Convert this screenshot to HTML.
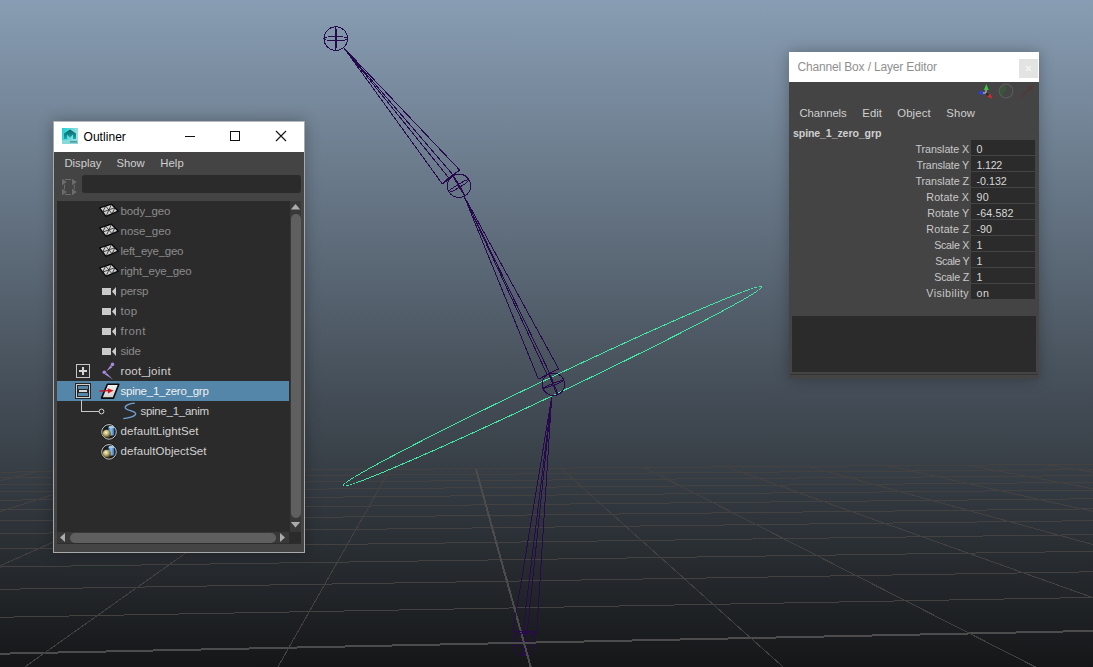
<!DOCTYPE html>
<html><head><meta charset="utf-8">
<style>
*{box-sizing:border-box;margin:0;padding:0}
html,body{width:1093px;height:667px;overflow:hidden}
body{position:relative;font-family:"Liberation Sans",sans-serif;
 background:linear-gradient(to bottom,rgb(136,157,179) 0px,rgb(13,13,13) 713px) 0 0/1093px 713px no-repeat;}
svg.vp{position:absolute;left:0;top:0}
.win{position:absolute;background:#444;}
.abs{position:absolute}
.title{position:absolute;left:0;top:0;right:0;background:#fff;}
.t{position:absolute;white-space:nowrap;line-height:1}
</style></head><body>
<svg class="vp" width="1093" height="667" viewBox="0 0 1093 667">
<g shape-rendering="crispEdges">
<circle cx="524" cy="643.9" r="11.65" fill="none" stroke="#28094e" stroke-width="1"/><ellipse cx="524" cy="643.9" rx="11.65" ry="2.21" transform="rotate(0 524 643.9)" fill="none" stroke="#28094e" stroke-width="1"/><ellipse cx="524" cy="643.9" rx="11.65" ry="0.58" transform="rotate(90 524 643.9)" fill="none" stroke="#28094e" stroke-width="1"/>
<line x1="-635.99" y1="476.71" x2="1422.83" y2="461.87" stroke="#444240" stroke-width="1"/>
<line x1="-701.77" y1="483.35" x2="1472.77" y2="466.71" stroke="#444240" stroke-width="1"/>
<line x1="-776.04" y1="490.83" x2="1528.11" y2="472.06" stroke="#444240" stroke-width="1"/>
<line x1="-860.57" y1="499.35" x2="1589.76" y2="478.04" stroke="#444240" stroke-width="1"/>
<line x1="-957.65" y1="509.14" x2="1658.88" y2="484.73" stroke="#444240" stroke-width="1"/>
<line x1="-1070.28" y1="520.50" x2="1736.90" y2="492.29" stroke="#444240" stroke-width="1"/>
<line x1="-1202.54" y1="533.83" x2="1825.66" y2="500.88" stroke="#444240" stroke-width="1"/>
<line x1="-1360.04" y1="549.71" x2="1927.56" y2="510.75" stroke="#444240" stroke-width="1"/>
<line x1="-1550.78" y1="568.94" x2="2045.73" y2="522.20" stroke="#444240" stroke-width="1"/>
<line x1="-1786.51" y1="592.70" x2="2184.42" y2="535.63" stroke="#444240" stroke-width="1"/>
<line x1="-2085.28" y1="622.82" x2="2349.47" y2="551.61" stroke="#444240" stroke-width="1"/>
<line x1="-2476.28" y1="662.24" x2="2549.19" y2="570.95" stroke="#444240" stroke-width="1"/>
<line x1="-3010.02" y1="716.55" x2="2795.78" y2="595.34" stroke="#4c4c4c" stroke-width="2"/>
<line x1="-3782.12" y1="793.89" x2="3107.94" y2="625.07" stroke="#444240" stroke-width="1"/>
<line x1="-635.99" y1="476.71" x2="-2573.06" y2="672.00" stroke="#444240" stroke-width="1"/>
<line x1="-536.00" y1="475.99" x2="-2312.58" y2="672.00" stroke="#444240" stroke-width="1"/>
<line x1="-437.44" y1="475.28" x2="-2052.40" y2="672.00" stroke="#444240" stroke-width="1"/>
<line x1="-340.27" y1="474.58" x2="-1792.55" y2="672.00" stroke="#444240" stroke-width="1"/>
<line x1="-244.48" y1="473.89" x2="-1533.01" y2="672.00" stroke="#444240" stroke-width="1"/>
<line x1="-150.02" y1="473.21" x2="-1273.78" y2="672.00" stroke="#444240" stroke-width="1"/>
<line x1="-56.88" y1="472.54" x2="-1014.87" y2="672.00" stroke="#444240" stroke-width="1"/>
<line x1="34.97" y1="471.88" x2="-756.27" y2="672.00" stroke="#444240" stroke-width="1"/>
<line x1="125.56" y1="471.22" x2="-497.98" y2="672.00" stroke="#444240" stroke-width="1"/>
<line x1="214.92" y1="470.58" x2="-240.00" y2="672.00" stroke="#444240" stroke-width="1"/>
<line x1="303.08" y1="469.94" x2="17.66" y2="672.00" stroke="#444240" stroke-width="1"/>
<line x1="390.04" y1="469.32" x2="275.01" y2="672.00" stroke="#444240" stroke-width="1"/>
<line x1="475.85" y1="468.70" x2="532.05" y2="672.00" stroke="#4c4c4c" stroke-width="2"/>
<line x1="560.52" y1="468.09" x2="788.79" y2="672.00" stroke="#444240" stroke-width="1"/>
<line x1="644.07" y1="467.48" x2="1045.21" y2="672.00" stroke="#444240" stroke-width="1"/>
<line x1="726.53" y1="466.89" x2="1301.32" y2="672.00" stroke="#444240" stroke-width="1"/>
<line x1="807.92" y1="466.30" x2="1557.13" y2="672.00" stroke="#444240" stroke-width="1"/>
<line x1="888.26" y1="465.72" x2="1812.63" y2="672.00" stroke="#444240" stroke-width="1"/>
<line x1="967.57" y1="465.15" x2="2067.82" y2="672.00" stroke="#444240" stroke-width="1"/>
<line x1="1045.86" y1="464.59" x2="2322.70" y2="672.00" stroke="#444240" stroke-width="1"/>
<line x1="1123.17" y1="464.03" x2="2577.28" y2="672.00" stroke="#444240" stroke-width="1"/>
<line x1="1199.50" y1="463.48" x2="2831.55" y2="672.00" stroke="#444240" stroke-width="1"/>
<line x1="1274.87" y1="462.94" x2="3085.52" y2="672.00" stroke="#444240" stroke-width="1"/>
<line x1="1349.31" y1="462.40" x2="3339.18" y2="672.00" stroke="#444240" stroke-width="1"/>
<line x1="1422.83" y1="461.87" x2="3592.54" y2="672.00" stroke="#444240" stroke-width="1"/>
</g>
<g shape-rendering="crispEdges">
<ellipse cx="552.3" cy="386.3" rx="231.48" ry="8.6" transform="rotate(-25.430 552.3 386.3)" fill="none" stroke="#44e6a4" stroke-width="1"/>
<circle cx="335.8" cy="38.6" r="11.8" fill="none" stroke="#28094e" stroke-width="1"/><ellipse cx="335.8" cy="38.6" rx="11.8" ry="0.47" transform="rotate(90 335.8 38.6)" fill="none" stroke="#28094e" stroke-width="1"/><ellipse cx="335.8" cy="38.6" rx="11.8" ry="2.01" transform="rotate(0 335.8 38.6)" fill="none" stroke="#28094e" stroke-width="1"/><line x1="344" y1="48" x2="442.5" y2="184.2" stroke="#28094e" stroke-width="1"/><line x1="344" y1="48" x2="448.8" y2="177.9" stroke="#28094e" stroke-width="1"/><line x1="344" y1="48" x2="453.3" y2="175.2" stroke="#28094e" stroke-width="1"/><line x1="344" y1="48" x2="459.6" y2="170" stroke="#28094e" stroke-width="1"/><polygon points="442.5,184.2 448.8,177.9 459.6,170 453.3,175.2" fill="none" stroke="#28094e" stroke-width="1"/><circle cx="459" cy="185.8" r="11.7" fill="none" stroke="#28094e" stroke-width="1"/><ellipse cx="459" cy="185.8" rx="11.7" ry="0.47" transform="rotate(60 459 185.8)" fill="none" stroke="#28094e" stroke-width="1"/><ellipse cx="459" cy="185.8" rx="11.7" ry="1.52" transform="rotate(-31 459 185.8)" fill="none" stroke="#28094e" stroke-width="1"/><line x1="464" y1="196" x2="538.5" y2="379.3" stroke="#28094e" stroke-width="1"/><line x1="464" y1="196" x2="547" y2="374.3" stroke="#28094e" stroke-width="1"/><line x1="464" y1="196" x2="549.7" y2="373.2" stroke="#28094e" stroke-width="1"/><line x1="464" y1="196" x2="558.7" y2="368.9" stroke="#28094e" stroke-width="1"/><polygon points="538.5,379.3 547,374.3 558.7,368.9 549.7,373.2" fill="none" stroke="#28094e" stroke-width="1"/><circle cx="553.4" cy="384.3" r="11.2" fill="none" stroke="#28094e" stroke-width="1"/><ellipse cx="553.4" cy="384.3" rx="11.2" ry="0.90" transform="rotate(-21 553.4 384.3)" fill="none" stroke="#28094e" stroke-width="1"/><ellipse cx="553.4" cy="384.3" rx="11.2" ry="0.56" transform="rotate(68 553.4 384.3)" fill="none" stroke="#28094e" stroke-width="1"/><line x1="551.7" y1="396.8" x2="513.1" y2="631" stroke="#28094e" stroke-width="1"/><line x1="551.7" y1="396.8" x2="523" y2="631" stroke="#28094e" stroke-width="1"/><line x1="551.7" y1="396.8" x2="527.3" y2="631.2" stroke="#28094e" stroke-width="1"/><line x1="551.7" y1="396.8" x2="536.7" y2="633.2" stroke="#28094e" stroke-width="1"/><polygon points="513.1,631 532,631 536.7,633.2 517.1,633.2" fill="none" stroke="#28094e" stroke-width="1"/>
</g>
</svg>

<!-- Outliner -->
<div class="win" style="left:53px;top:121px;width:252px;height:432px;border:1px solid #a9a9a9;border-top:none;box-shadow:0 0 14px rgba(0,0,0,0.28)">
  <div class="title" style="height:31px;border-top:1px solid #b9b9b9">
  </div>
</div>
<svg class="abs" style="left:62px;top:128px;" width="16" height="16" viewBox="0 0 16 16"><defs><linearGradient id="mg" x1="0" y1="0" x2="1" y2="0.3"><stop offset="0" stop-color="#18d0d4"/><stop offset="1" stop-color="#9fe0e2"/></linearGradient><linearGradient id="mg2" x1="0" y1="0" x2="0" y2="1"><stop offset="0" stop-color="#0a5f66"/><stop offset="1" stop-color="#1aa8ae"/></linearGradient></defs><rect x="0" y="0" width="16" height="16" fill="url(#mg)"/><polygon points="2,11 2,5.5 8,1.5 14,5.5 14,11 11,11 11,6.5 8,9.5 5,6.5 5,11" fill="url(#mg2)"/><rect x="0" y="12" width="16" height="4" fill="#86dada"/><rect x="8" y="13.2" width="7" height="1.3" fill="#4a8a8c"/></svg>
<div class="t" style="left:83.5px;top:131.00px;font-size:12px;color:#000000;font-weight:normal;letter-spacing:0.05px;">Outliner</div>
<div class="abs" style="left:185px;top:136px;width:10px;height:1px;background:#111;"></div>
<div class="abs" style="left:230px;top:131px;width:10px;height:10px;background:transparent;border:1px solid #111;"></div>
<svg class="abs" style="left:275px;top:130px;" width="12" height="12" viewBox="0 0 12 12"><path d="M1,1 L11,11 M11,1 L1,11" stroke="#111" stroke-width="1.1"/></svg>
<div class="t" style="left:64.5px;top:158.00px;font-size:11.3px;color:#cfcfcf;font-weight:normal;letter-spacing:-0.036px;">Display</div>
<div class="t" style="left:116.4px;top:158.00px;font-size:11.3px;color:#cfcfcf;font-weight:normal;letter-spacing:0.033px;">Show</div>
<div class="t" style="left:160.2px;top:158.00px;font-size:11.3px;color:#cfcfcf;font-weight:normal;letter-spacing:0.115px;">Help</div>
<svg class="abs" style="left:61px;top:178px;" width="17" height="18" viewBox="0 0 17 18"><g fill="#3a3a3a"><rect x="0" y="0" width="17" height="18" fill="none"/></g><g fill="#6c6c6c"><polygon points="1,0.8 5.8,4 1,7.2"/><polygon points="11,0.8 15.8,4 11,7.2"/><polygon points="1,10.8 5.8,14 1,17.2"/><polygon points="11,10.8 15.8,14 11,17.2"/><rect x="4" y="1" width="6" height="1"/><rect x="4" y="16" width="6" height="1"/><rect x="3" y="6.7" width="1" height="4.5"/><rect x="12.8" y="6.7" width="1" height="4.5"/></g></svg>
<div class="abs" style="left:82px;top:175px;width:218.5px;height:18px;background:#2b2b2b;border-radius:3px;"></div>
<div class="abs" style="left:57px;top:201px;width:233px;height:331px;background:#2b2b2b;"></div>
<div class="abs" style="left:290px;top:201px;width:11px;height:331px;background:#383838;"></div>
<svg class="abs" style="left:290px;top:203px;" width="11" height="8" viewBox="0 0 11 8"><polygon points="0.8,6.5 5.5,1 10.2,6.5" fill="#ababab"/></svg>
<div class="abs" style="left:291px;top:214px;width:10px;height:304px;background:#5f5f5f;border-radius:5px;"></div>
<svg class="abs" style="left:290px;top:521px;" width="11" height="8" viewBox="0 0 11 8"><polygon points="0.8,1 5.5,6.5 10.2,1" fill="#ababab"/></svg>
<div class="abs" style="left:57px;top:532px;width:232px;height:11px;background:#383838;"></div>
<div class="abs" style="left:289px;top:532px;width:12px;height:11px;background:#2b2b2b;"></div>
<div class="abs" style="left:57px;top:543px;width:244px;height:1px;background:#2e2e2e;"></div>
<div class="abs" style="left:70px;top:533px;width:206px;height:10px;background:#5f5f5f;border-radius:5px;"></div>
<svg class="abs" style="left:59px;top:532px;" width="8" height="11" viewBox="0 0 8 11"><polygon points="6,1 1,5.5 6,10" fill="#ababab"/></svg>
<svg class="abs" style="left:279px;top:532px;" width="8" height="11" viewBox="0 0 8 11"><polygon points="1,1 6,5.5 1,10" fill="#ababab"/></svg>
<svg class="abs" style="left:99px;top:202px;" width="20" height="16" viewBox="0 0 20 16"><polygon points="0.60,5.80 12.50,2.20 19.30,9.20 7.00,14.30" fill="#d4d4d4" stroke="#0a0a0a" stroke-width="1.3" stroke-linejoin="round"/><g stroke="#1a1a1a" stroke-width="0.75"><line x1="6.55" y1="4.0" x2="13.15" y2="11.75"/><line x1="15.9" y1="5.699999999999999" x2="3.8" y2="10.05"/><line x1="12.5" y1="2.2" x2="7" y2="14.3"/><line x1="6.55" y1="4.0" x2="3.8" y2="10.05"/><line x1="15.9" y1="5.699999999999999" x2="13.15" y2="11.75"/></g></svg>
<div class="t" style="left:120.5px;top:206.00px;font-size:11.5px;color:#8b8b8b;font-weight:normal;letter-spacing:-0.09px;">body_geo</div>
<svg class="abs" style="left:99px;top:222px;" width="20" height="16" viewBox="0 0 20 16"><polygon points="0.60,5.80 12.50,2.20 19.30,9.20 7.00,14.30" fill="#d4d4d4" stroke="#0a0a0a" stroke-width="1.3" stroke-linejoin="round"/><g stroke="#1a1a1a" stroke-width="0.75"><line x1="6.55" y1="4.0" x2="13.15" y2="11.75"/><line x1="15.9" y1="5.699999999999999" x2="3.8" y2="10.05"/><line x1="12.5" y1="2.2" x2="7" y2="14.3"/><line x1="6.55" y1="4.0" x2="3.8" y2="10.05"/><line x1="15.9" y1="5.699999999999999" x2="13.15" y2="11.75"/></g></svg>
<div class="t" style="left:120.5px;top:226.00px;font-size:11.5px;color:#8b8b8b;font-weight:normal;letter-spacing:0px;">nose_geo</div>
<svg class="abs" style="left:99px;top:242px;" width="20" height="16" viewBox="0 0 20 16"><polygon points="0.60,5.80 12.50,2.20 19.30,9.20 7.00,14.30" fill="#d4d4d4" stroke="#0a0a0a" stroke-width="1.3" stroke-linejoin="round"/><g stroke="#1a1a1a" stroke-width="0.75"><line x1="6.55" y1="4.0" x2="13.15" y2="11.75"/><line x1="15.9" y1="5.699999999999999" x2="3.8" y2="10.05"/><line x1="12.5" y1="2.2" x2="7" y2="14.3"/><line x1="6.55" y1="4.0" x2="3.8" y2="10.05"/><line x1="15.9" y1="5.699999999999999" x2="13.15" y2="11.75"/></g></svg>
<div class="t" style="left:120.5px;top:246.00px;font-size:11.5px;color:#8b8b8b;font-weight:normal;letter-spacing:-0.264px;">left_eye_geo</div>
<svg class="abs" style="left:99px;top:262px;" width="20" height="16" viewBox="0 0 20 16"><polygon points="0.60,5.80 12.50,2.20 19.30,9.20 7.00,14.30" fill="#d4d4d4" stroke="#0a0a0a" stroke-width="1.3" stroke-linejoin="round"/><g stroke="#1a1a1a" stroke-width="0.75"><line x1="6.55" y1="4.0" x2="13.15" y2="11.75"/><line x1="15.9" y1="5.699999999999999" x2="3.8" y2="10.05"/><line x1="12.5" y1="2.2" x2="7" y2="14.3"/><line x1="6.55" y1="4.0" x2="3.8" y2="10.05"/><line x1="15.9" y1="5.699999999999999" x2="13.15" y2="11.75"/></g></svg>
<div class="t" style="left:120.5px;top:266.00px;font-size:11.5px;color:#8b8b8b;font-weight:normal;letter-spacing:-0.146px;">right_eye_geo</div>
<svg class="abs" style="left:101px;top:286px;" width="17" height="11" viewBox="0 0 17 11"><rect x="1" y="2" width="9" height="7" fill="#cacaca"/><polygon points="11,5.5 15,1 15,10" fill="#cacaca"/></svg>
<div class="t" style="left:120.5px;top:286.00px;font-size:11.5px;color:#8b8b8b;font-weight:normal;letter-spacing:-0.214px;">persp</div>
<svg class="abs" style="left:101px;top:306px;" width="17" height="11" viewBox="0 0 17 11"><rect x="1" y="2" width="9" height="7" fill="#cacaca"/><polygon points="11,5.5 15,1 15,10" fill="#cacaca"/></svg>
<div class="t" style="left:120.5px;top:306.00px;font-size:11.5px;color:#8b8b8b;font-weight:normal;letter-spacing:0.271px;">top</div>
<svg class="abs" style="left:101px;top:326px;" width="17" height="11" viewBox="0 0 17 11"><rect x="1" y="2" width="9" height="7" fill="#cacaca"/><polygon points="11,5.5 15,1 15,10" fill="#cacaca"/></svg>
<div class="t" style="left:120.5px;top:326.00px;font-size:11.5px;color:#8b8b8b;font-weight:normal;letter-spacing:0.478px;">front</div>
<svg class="abs" style="left:101px;top:346px;" width="17" height="11" viewBox="0 0 17 11"><rect x="1" y="2" width="9" height="7" fill="#cacaca"/><polygon points="11,5.5 15,1 15,10" fill="#cacaca"/></svg>
<div class="t" style="left:120.5px;top:346.00px;font-size:11.5px;color:#8b8b8b;font-weight:normal;letter-spacing:-0.274px;">side</div>
<div class="abs" style="left:76px;top:364px;width:14px;height:14px;background:transparent;border:1px solid #c4c4c4;"></div>
<div class="abs" style="left:79px;top:370px;width:8px;height:2px;background:#d6d6d6;"></div>
<div class="abs" style="left:82px;top:367px;width:2px;height:8px;background:#d6d6d6;"></div>
<svg class="abs" style="left:100px;top:361px;" width="16" height="20" viewBox="0 0 16 20"><g fill="#a48ad8"><circle cx="12.5" cy="3.4" r="1.8"/><circle cx="4.3" cy="11.3" r="1.8"/><polygon points="10.6,4.3 12.3,6.2 6.3,10.2"/><polygon points="4.6,13.3 6.6,12 13,18.6"/></g></svg>
<div class="t" style="left:120.5px;top:366.00px;font-size:11.5px;color:#d2d2d2;font-weight:normal;letter-spacing:0.309px;">root_joint</div>
<div class="abs" style="left:57px;top:381px;width:232px;height:20px;background:#5386a8;"></div>
<div class="abs" style="left:75px;top:383px;width:16px;height:16px;background:transparent;border:1px solid #262626;"></div>
<div class="abs" style="left:76px;top:384px;width:14px;height:14px;background:transparent;border:1px solid #cfcfcf;"></div>
<div class="abs" style="left:77px;top:385px;width:12px;height:12px;background:transparent;border:1px solid #262626;"></div>
<div class="abs" style="left:78px;top:389px;width:10px;height:4px;background:#262626;"></div>
<div class="abs" style="left:79px;top:390px;width:8px;height:2px;background:#d8d8d8;"></div>
<svg class="abs" style="left:98px;top:382px;" width="24" height="18" viewBox="0 0 24 18"><defs><linearGradient id="tg" x1="0" y1="0" x2="0" y2="1"><stop offset="0" stop-color="#f2f2f2"/><stop offset="1" stop-color="#cfcfcf"/></linearGradient></defs><polygon points="9.4,2.2 20.8,2.2 15.4,16.1 3.5,16.1" fill="url(#tg)" stroke="#0a0a0a" stroke-width="1.6" stroke-linejoin="round"/><line x1="1.5" y1="9" x2="11" y2="8.6" stroke="#b8202a" stroke-width="1.4"/><polygon points="9.5,6.2 15.6,8.6 10,11.5" fill="#d4141c"/></svg>
<div class="t" style="left:120.5px;top:386.00px;font-size:11.5px;color:#eef0f2;font-weight:normal;letter-spacing:-0.248px;">spine_1_zero_grp</div>
<div class="abs" style="left:81px;top:400px;width:1px;height:12px;background:#c8c8c8;"></div>
<div class="abs" style="left:81px;top:411px;width:18px;height:1px;background:#c8c8c8;"></div>
<svg class="abs" style="left:98px;top:408px;" width="8" height="8" viewBox="0 0 8 8"><circle cx="3.5" cy="3.5" r="2.4" fill="#2b2b2b" stroke="#cfcfcf" stroke-width="1"/></svg>
<svg class="abs" style="left:120px;top:400px;" width="20" height="22" viewBox="0 0 20 22"><path d="M14.8,3.2 C9,3.6 4.5,5.5 5.3,8 C6.2,10.5 15,11 15.6,13.5 C16,16.2 9,18 3.3,18.6" fill="none" stroke="#6fa2d2" stroke-width="1.3"/></svg>
<div class="t" style="left:140.5px;top:406.00px;font-size:11.5px;color:#d2d2d2;font-weight:normal;letter-spacing:-0.284px;">spine_1_anim</div>
<svg class="abs" style="left:99px;top:421px;" width="20" height="20" viewBox="0 0 20 20"><defs><radialGradient id="gs421" cx="0.4" cy="0.35" r="0.65"><stop offset="0" stop-color="#fbf6cc"/><stop offset="0.55" stop-color="#b3a462"/><stop offset="1" stop-color="#4a4220"/></radialGradient><linearGradient id="gc421" x1="0" y1="0" x2="1" y2="0"><stop offset="0" stop-color="#3b74b4"/><stop offset="0.45" stop-color="#8fc0ea"/><stop offset="1" stop-color="#3470ae"/></linearGradient></defs><circle cx="10" cy="10.9" r="8.3" fill="#151515"/><circle cx="10" cy="10.9" r="7.3" fill="#1e1e1e" stroke="#c8c8c8" stroke-width="1"/><rect x="9.4" y="5.6" width="5.8" height="8.8" rx="1.5" fill="url(#gc421)"/><ellipse cx="12.3" cy="6.2" rx="2.9" ry="1.1" fill="#a8d0f0"/><circle cx="7.8" cy="12.7" r="4" fill="url(#gs421)"/></svg>
<div class="t" style="left:120.5px;top:426.00px;font-size:11.5px;color:#d2d2d2;font-weight:normal;letter-spacing:0.091px;">defaultLightSet</div>
<svg class="abs" style="left:99px;top:441px;" width="20" height="20" viewBox="0 0 20 20"><defs><radialGradient id="gs441" cx="0.4" cy="0.35" r="0.65"><stop offset="0" stop-color="#fbf6cc"/><stop offset="0.55" stop-color="#b3a462"/><stop offset="1" stop-color="#4a4220"/></radialGradient><linearGradient id="gc441" x1="0" y1="0" x2="1" y2="0"><stop offset="0" stop-color="#3b74b4"/><stop offset="0.45" stop-color="#8fc0ea"/><stop offset="1" stop-color="#3470ae"/></linearGradient></defs><circle cx="10" cy="10.9" r="8.3" fill="#151515"/><circle cx="10" cy="10.9" r="7.3" fill="#1e1e1e" stroke="#c8c8c8" stroke-width="1"/><rect x="9.4" y="5.6" width="5.8" height="8.8" rx="1.5" fill="url(#gc441)"/><ellipse cx="12.3" cy="6.2" rx="2.9" ry="1.1" fill="#a8d0f0"/><circle cx="7.8" cy="12.7" r="4" fill="url(#gs441)"/></svg>
<div class="t" style="left:120.5px;top:446.00px;font-size:11.5px;color:#d2d2d2;font-weight:normal;letter-spacing:0.067px;">defaultObjectSet</div>

<!-- Channel Box -->
<div class="win" style="left:789px;top:52px;width:250px;height:327px;box-shadow:0 0 14px rgba(0,0,0,0.28)">
  <div class="title" style="height:30px"></div>
</div>
<div class="t" style="left:797.5px;top:61.00px;font-size:12px;color:#8f8f8f;font-weight:normal;letter-spacing:-0.16px;">Channel Box / Layer Editor</div>
<div class="abs" style="left:1019px;top:59px;width:19px;height:19px;background:#e3e3e3;"></div>
<svg class="abs" style="left:1019px;top:59px;" width="19" height="19" viewBox="0 0 19 19"><path d="M7,7 L12,12 M12,7 L7,12" stroke="#f7f7f7" stroke-width="1.1"/></svg>
<svg class="abs" style="left:976px;top:83px;" width="18" height="17" viewBox="0 0 18 17"><g stroke="#c0c0c0" stroke-width="1.2"><line x1="10" y1="10" x2="10" y2="6"/><line x1="10" y1="10" x2="6" y2="10"/></g><line x1="10" y1="10" x2="13" y2="13" stroke="#222" stroke-width="1.2"/><polygon points="10.3,1 12.7,7 7.9,7" fill="#3fc73f"/><polygon points="1.2,9.7 7,7.2 7,12.6" fill="#2c40d0"/><polygon points="16.7,15.6 11.3,13.8 14.1,10.4" fill="#d62828"/></svg>
<svg class="abs" style="left:998px;top:83px;" width="16" height="16" viewBox="0 0 16 16"><path d="M8,1.2 A6.8,6.8 0 0 0 4,13.5 L8,8 Z" fill="#3b523b"/><circle cx="8" cy="8" r="6.9" fill="none" stroke="#5a5a5a" stroke-width="1.2"/></svg>
<svg class="abs" style="left:1019px;top:83px;" width="16" height="17" viewBox="0 0 16 17"><line x1="1.5" y1="15" x2="12" y2="4" stroke="#553838" stroke-width="1.5"/><polygon points="14.5,1.5 8.5,3.2 12.8,7.6" fill="#553838"/></svg>
<div class="t" style="left:799.5px;top:108.00px;font-size:11.3px;color:#cfcfcf;font-weight:normal;letter-spacing:-0.081px;">Channels</div>
<div class="t" style="left:862.3px;top:108.00px;font-size:11.3px;color:#cfcfcf;font-weight:normal;letter-spacing:0.057px;">Edit</div>
<div class="t" style="left:897.3px;top:108.00px;font-size:11.3px;color:#cfcfcf;font-weight:normal;letter-spacing:0.124px;">Object</div>
<div class="t" style="left:946.3px;top:108.00px;font-size:11.3px;color:#cfcfcf;font-weight:normal;letter-spacing:0.158px;">Show</div>
<div class="t" style="left:793px;top:128.00px;font-size:10.6px;color:#cfcfcf;font-weight:bold;letter-spacing:-0.115px;">spine_1_zero_grp</div>
<div class="abs" style="left:971px;top:140px;width:64px;height:15px;background:#2b2b2b;"></div>
<div class="t" style="left:915.4000000000001px;top:144.00px;font-size:10.7px;color:#c9c9c9;font-weight:normal;letter-spacing:-0.047px;">Translate X</div>
<div class="t" style="left:976.5px;top:144.00px;font-size:10.7px;color:#d8d8d8;font-weight:normal;letter-spacing:0px;">0</div>
<div class="abs" style="left:971px;top:156px;width:64px;height:15px;background:#2b2b2b;"></div>
<div class="t" style="left:916.4000000000001px;top:160.00px;font-size:10.7px;color:#c9c9c9;font-weight:normal;letter-spacing:-0.12px;">Translate Y</div>
<div class="t" style="left:976.5px;top:160.00px;font-size:10.7px;color:#d8d8d8;font-weight:normal;letter-spacing:-0.235px;">1.122</div>
<div class="abs" style="left:971px;top:172px;width:64px;height:15px;background:#2b2b2b;"></div>
<div class="t" style="left:915.4000000000001px;top:176.00px;font-size:10.7px;color:#c9c9c9;font-weight:normal;letter-spacing:0.008px;">Translate Z</div>
<div class="t" style="left:976.5px;top:176.00px;font-size:10.7px;color:#d8d8d8;font-weight:normal;letter-spacing:0px;">-0.132</div>
<div class="abs" style="left:971px;top:188px;width:64px;height:15px;background:#2b2b2b;"></div>
<div class="t" style="left:926.3000000000001px;top:192.00px;font-size:10.7px;color:#c9c9c9;font-weight:normal;letter-spacing:0.158px;">Rotate X</div>
<div class="t" style="left:976.5px;top:192.00px;font-size:10.7px;color:#d8d8d8;font-weight:normal;letter-spacing:0.349px;">90</div>
<div class="abs" style="left:971px;top:204px;width:64px;height:15px;background:#2b2b2b;"></div>
<div class="t" style="left:927.3000000000001px;top:208.00px;font-size:10.7px;color:#c9c9c9;font-weight:normal;letter-spacing:0.057px;">Rotate Y</div>
<div class="t" style="left:976.5px;top:208.00px;font-size:10.7px;color:#d8d8d8;font-weight:normal;letter-spacing:0.116px;">-64.582</div>
<div class="abs" style="left:971px;top:220px;width:64px;height:15px;background:#2b2b2b;"></div>
<div class="t" style="left:926.3000000000001px;top:224.00px;font-size:10.7px;color:#c9c9c9;font-weight:normal;letter-spacing:0.233px;">Rotate Z</div>
<div class="t" style="left:976.5px;top:224.00px;font-size:10.7px;color:#d8d8d8;font-weight:normal;letter-spacing:0px;">-90</div>
<div class="abs" style="left:971px;top:236px;width:64px;height:15px;background:#2b2b2b;"></div>
<div class="t" style="left:934.2px;top:240.00px;font-size:10.7px;color:#c9c9c9;font-weight:normal;letter-spacing:-0.268px;">Scale X</div>
<div class="t" style="left:976.5px;top:240.00px;font-size:10.7px;color:#d8d8d8;font-weight:normal;letter-spacing:0px;">1</div>
<div class="abs" style="left:971px;top:252px;width:64px;height:15px;background:#2b2b2b;"></div>
<div class="t" style="left:935.2px;top:256.00px;font-size:10.7px;color:#c9c9c9;font-weight:normal;letter-spacing:-0.383px;">Scale Y</div>
<div class="t" style="left:976.5px;top:256.00px;font-size:10.7px;color:#d8d8d8;font-weight:normal;letter-spacing:0px;">1</div>
<div class="abs" style="left:971px;top:268px;width:64px;height:15px;background:#2b2b2b;"></div>
<div class="t" style="left:934.2px;top:272.00px;font-size:10.7px;color:#c9c9c9;font-weight:normal;letter-spacing:-0.182px;">Scale Z</div>
<div class="t" style="left:976.5px;top:272.00px;font-size:10.7px;color:#d8d8d8;font-weight:normal;letter-spacing:0px;">1</div>
<div class="abs" style="left:971px;top:284px;width:64px;height:15px;background:#2b2b2b;"></div>
<div class="t" style="left:926.3000000000001px;top:288.00px;font-size:10.7px;color:#c9c9c9;font-weight:normal;letter-spacing:0.445px;">Visibility</div>
<div class="t" style="left:976.5px;top:288.00px;font-size:10.7px;color:#d8d8d8;font-weight:normal;letter-spacing:0.649px;">on</div>
<div class="abs" style="left:792px;top:316px;width:244px;height:56px;background:#2b2b2b;"></div>
<div class="abs" style="left:790px;top:374px;width:248px;height:1px;background:#333;"></div>
</body></html>
